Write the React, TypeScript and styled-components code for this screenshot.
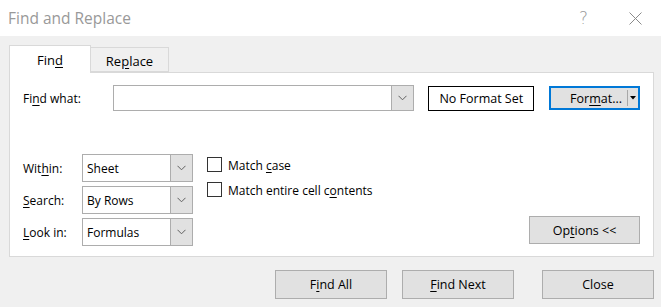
import styled, { createGlobalStyle } from "styled-components";

const GlobalStyle = createGlobalStyle`
  body {
    margin: 0;
    background: #f0f0f0;
    font-family: "Open Sans", "Noto Sans", sans-serif;
    font-size: 12px;
    color: #000;
  }
`;

const Window = styled.div`
  width: 661px;
  height: 307px;
  background: #f0f0f0;
  display: flex;
  flex-direction: column;
  overflow: hidden;
`;

const TitleBar = styled.div`
  height: 36px;
  background: #fff;
  display: flex;
  align-items: center;
  padding-left: 8px;
  box-sizing: border-box;
`;

const Title = styled.div`
  font-size: 15.5px;
  color: #999;
  flex: 1;
`;

const TitleControls = styled.div`
  display: flex;
  align-items: center;
  gap: 41px;
  padding-right: 19px;
  color: #8a8a8a;
`;

const HelpMark = styled.span`
  font-size: 17px;
  font-family: "DejaVu Sans", sans-serif;
  font-weight: 300;
  color: #9a9a9a;
`;

const Body = styled.div`
  padding: 9px 7px 0 9px;
`;

const TabStrip = styled.div`
  display: flex;
  align-items: flex-end;
  height: 27px;
  position: relative;
  z-index: 1;
`;

const Tab = styled.div<{ $active?: boolean }>`
  box-sizing: border-box;
  display: flex;
  align-items: center;
  justify-content: center;
  font-size: 13px;
  border: 1px solid #d9d9d9;
  width: ${p => (p.$active ? "82px" : "78px")};
  height: ${p => (p.$active ? "28px" : "25px")};
  margin-bottom: ${p => (p.$active ? "-1px" : "0")};
  background: ${p => (p.$active ? "#fff" : "#f0f0f0")};
  border-bottom: ${p => (p.$active ? "none" : "1px solid #d9d9d9")};
  border-left: ${p => (p.$active ? "1px solid #d9d9d9" : "none")};
  padding-top: ${p => (p.$active ? "0" : "2px")};
`;

const Panel = styled.div`
  box-sizing: border-box;
  height: 185px;
  background: #fff;
  border: 1px solid #d9d9d9;
  padding: 12px 13px 0 13px;
  display: flex;
  flex-direction: column;
`;

const FindRow = styled.div`
  display: flex;
  align-items: center;
  height: 26px;
`;

const Label = styled.div<{ $width: number }>`
  width: ${p => p.$width}px;
  flex-shrink: 0;
`;

const Combo = styled.div<{ $width: number; $height: number }>`
  box-sizing: border-box;
  width: ${p => p.$width}px;
  height: ${p => p.$height}px;
  border: 1px solid #adadad;
  background: #fff;
  display: flex;
`;

const ComboText = styled.div`
  flex: 1;
  display: flex;
  align-items: center;
  padding-left: 4px;
`;

const ComboButton = styled.div`
  width: 21px;
  background: #e1e1e1;
  border-left: 1px solid #adadad;
  display: flex;
  align-items: center;
  justify-content: center;
`;

const FormatPreview = styled.div`
  box-sizing: border-box;
  width: 106px;
  height: 25px;
  margin-left: 14px;
  border: 1px solid #000;
  display: flex;
  align-items: center;
  justify-content: center;
  font-size: 12.5px;
`;

const FormatButton = styled.div`
  box-sizing: border-box;
  width: 91px;
  height: 24px;
  margin-left: 15px;
  border: 2px solid #0078d7;
  background: #e1e1e1;
  display: flex;
  align-items: stretch;
`;

const FormatLabel = styled.div`
  flex: 1;
  display: flex;
  align-items: center;
  justify-content: flex-end;
  padding-right: 5px;
  font-size: 12.5px;
`;

const SplitDivider = styled.div`
  width: 1px;
  margin: 2px 0;
  background: #a8a8a8;
`;

const SplitArrow = styled.div`
  width: 10px;
  display: flex;
  align-items: center;
  justify-content: center;
`;

const LowerArea = styled.div`
  display: flex;
  margin-top: 43px;
  height: 92px;
`;

const FieldGrid = styled.div`
  display: grid;
  grid-template-columns: 59px 111px;
  grid-auto-rows: 28px;
  row-gap: 4px;
  align-items: center;
`;

const CheckColumn = styled.div`
  display: flex;
  flex-direction: column;
  gap: 10px;
  margin-left: 14px;
  padding-top: 3px;
`;

const CheckRow = styled.label`
  display: flex;
  align-items: center;
  gap: 6px;
  height: 15px;
`;

const CheckBox = styled.span`
  box-sizing: border-box;
  width: 15px;
  height: 15px;
  border: 1px solid #333;
  background: #fff;
`;

const CheckText = styled.span`
  padding-top: 2px;
`;

const Button = styled.div<{ $height?: number }>`
  box-sizing: border-box;
  width: ${p => (p.$height === 28 ? "111px" : "112px")};
  height: ${p => p.$height ?? 29}px;
  border: 1px solid #adadad;
  background: #e1e1e1;
  display: flex;
  align-items: center;
  justify-content: center;
  font-size: 12.5px;
`;

const OptionsWrap = styled.div`
  margin-left: auto;
  align-self: flex-end;
  margin-bottom: 2px;
`;

const Footer = styled.div`
  display: flex;
  justify-content: flex-end;
  padding: 13px 7px 0 0;
`;

const FooterGap = styled.div<{ $w: number }>`
  width: ${p => p.$w}px;
`;

const U = styled.span`
  text-decoration: underline;
  text-underline-offset: 2px;
`;

function Chevron() {
  return (
    <svg width="9" height="6" viewBox="0 0 9 6">
      <polyline points="0.5,0.8 4.5,4.8 8.5,0.8" fill="none" stroke="#606060" strokeWidth="1" />
    </svg>
  );
}

function Select({ value }: { value: string }) {
  return (
    <Combo $width={111} $height={28}>
      <ComboText>{value}</ComboText>
      <ComboButton>
        <Chevron />
      </ComboButton>
    </Combo>
  );
}

export default function App() {
  return (
    <Window>
      <GlobalStyle />
      <TitleBar>
        <Title>Find and Replace</Title>
        <TitleControls>
          <HelpMark>?</HelpMark>
          <svg width="13" height="13" viewBox="0 0 13 13">
            <path d="M0.5 0.5 L12.5 12.5 M12.5 0.5 L0.5 12.5" stroke="#8a8a8a" strokeWidth="1" />
          </svg>
        </TitleControls>
      </TitleBar>
      <Body>
        <TabStrip>
          <Tab $active>
            Fin<U>d</U>
          </Tab>
          <Tab>
            Re<U>p</U>lace
          </Tab>
        </TabStrip>
        <Panel>
          <FindRow>
            <Label $width={90}>
              Fi<U>n</U>d what:
            </Label>
            <Combo $width={302} $height={26}>
              <ComboText />
              <ComboButton>
                <Chevron />
              </ComboButton>
            </Combo>
            <FormatPreview>No Format Set</FormatPreview>
            <FormatButton>
              <FormatLabel>
                For<U>m</U>at...
              </FormatLabel>
              <SplitDivider />
              <SplitArrow>
                <svg width="6" height="4" viewBox="0 0 6 4">
                  <polygon points="0,0 6,0 3,3.5" fill="#000" />
                </svg>
              </SplitArrow>
            </FormatButton>
          </FindRow>
          <LowerArea>
            <FieldGrid>
              <span>
                Wit<U>h</U>in:
              </span>
              <Select value="Sheet" />
              <span>
                <U>S</U>earch:
              </span>
              <Select value="By Rows" />
              <span>
                <U>L</U>ook in:
              </span>
              <Select value="Formulas" />
            </FieldGrid>
            <CheckColumn>
              <CheckRow>
                <CheckBox />
                <CheckText>
                  Match <U>c</U>ase
                </CheckText>
              </CheckRow>
              <CheckRow>
                <CheckBox />
                <CheckText>
                  Match entire cell c<U>o</U>ntents
                </CheckText>
              </CheckRow>
            </CheckColumn>
            <OptionsWrap>
              <Button $height={28}>
                Op<U>t</U>ions &lt;&lt;
              </Button>
            </OptionsWrap>
          </LowerArea>
        </Panel>
      </Body>
      <Footer>
        <Button>
          F<U>i</U>nd All
        </Button>
        <FooterGap $w={15} />
        <Button>
          <U>F</U>ind Next
        </Button>
        <FooterGap $w={28} />
        <Button>Close</Button>
      </Footer>
    </Window>
  );
}
